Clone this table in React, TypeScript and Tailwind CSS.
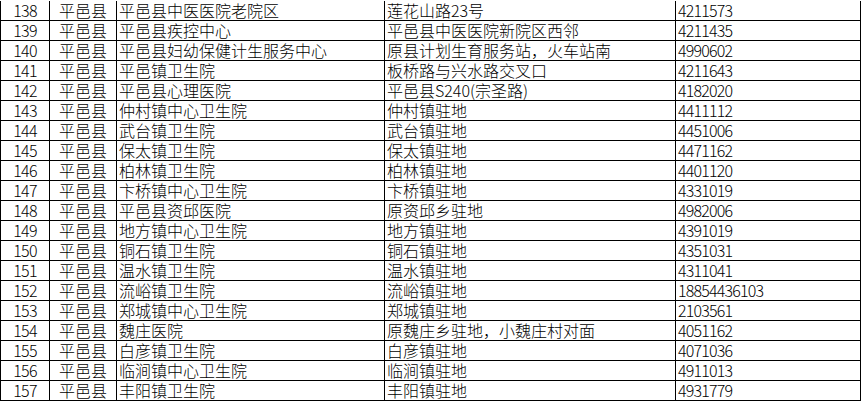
import React from 'react';

type Row = [string, string, string, string, string];

const rows: Row[] = [
    ['138', '平邑县', '平邑县中医医院老院区', '莲花山路23号', '4211573'],
    ['139', '平邑县', '平邑县疾控中心', '平邑县中医医院新院区西邻', '4211435'],
    ['140', '平邑县', '平邑县妇幼保健计生服务中心', '原县计划生育服务站，火车站南', '4990602'],
    ['141', '平邑县', '平邑镇卫生院', '板桥路与兴水路交叉口', '4211643'],
    ['142', '平邑县', '平邑县心理医院', '平邑县S240(宗圣路)', '4182020'],
    ['143', '平邑县', '仲村镇中心卫生院', '仲村镇驻地', '4411112'],
    ['144', '平邑县', '武台镇卫生院', '武台镇驻地', '4451006'],
    ['145', '平邑县', '保太镇卫生院', '保太镇驻地', '4471162'],
    ['146', '平邑县', '柏林镇卫生院', '柏林镇驻地', '4401120'],
    ['147', '平邑县', '卞桥镇中心卫生院', '卞桥镇驻地', '4331019'],
    ['148', '平邑县', '平邑县资邱医院', '原资邱乡驻地', '4982006'],
    ['149', '平邑县', '地方镇中心卫生院', '地方镇驻地', '4391019'],
    ['150', '平邑县', '铜石镇卫生院', '铜石镇驻地', '4351031'],
    ['151', '平邑县', '温水镇卫生院', '温水镇驻地', '4311041'],
    ['152', '平邑县', '流峪镇卫生院', '流峪镇驻地', '18854436103'],
    ['153', '平邑县', '郑城镇中心卫生院', '郑城镇驻地', '2103561'],
    ['154', '平邑县', '魏庄医院', '原魏庄乡驻地，小魏庄村对面', '4051162'],
    ['155', '平邑县', '白彦镇卫生院', '白彦镇驻地', '4071036'],
    ['156', '平邑县', '临涧镇中心卫生院', '临涧镇驻地', '4911013'],
    ['157', '平邑县', '丰阳镇卫生院', '丰阳镇驻地', '4931779'],
];

// each row: 19px of content plus a 1px bottom rule
const cell = 'h-[19px] border-r border-black flex items-center whitespace-nowrap';

export default function App() {
    return (
        <div
            className="w-[864px] h-[403px] bg-white pt-[1px] text-black text-[16px] leading-[19px] font-light"
            style={{ fontFamily: '"Noto Sans CJK SC", "Liberation Sans", sans-serif' }}
        >
            {rows.map(([no, county, name, addr, phone]) => (
                <div key={no} className="flex w-[861px] border-l border-b border-black">
                    <div className={`${cell} w-[49px] justify-center tracking-[-0.8px]`}>{no}</div>
                    <div className={`${cell} w-[67px] justify-center`}>{county}</div>
                    <div className={`${cell} w-[268px] pl-[2px]`}>{name}</div>
                    <div className={`${cell} w-[291px] pl-[2px]`}>{addr}</div>
                    <div className={`${cell} w-[185px] pl-[2px] tracking-[-0.8px]`}>{phone}</div>
                </div>
            ))}
        </div>
    );
}
